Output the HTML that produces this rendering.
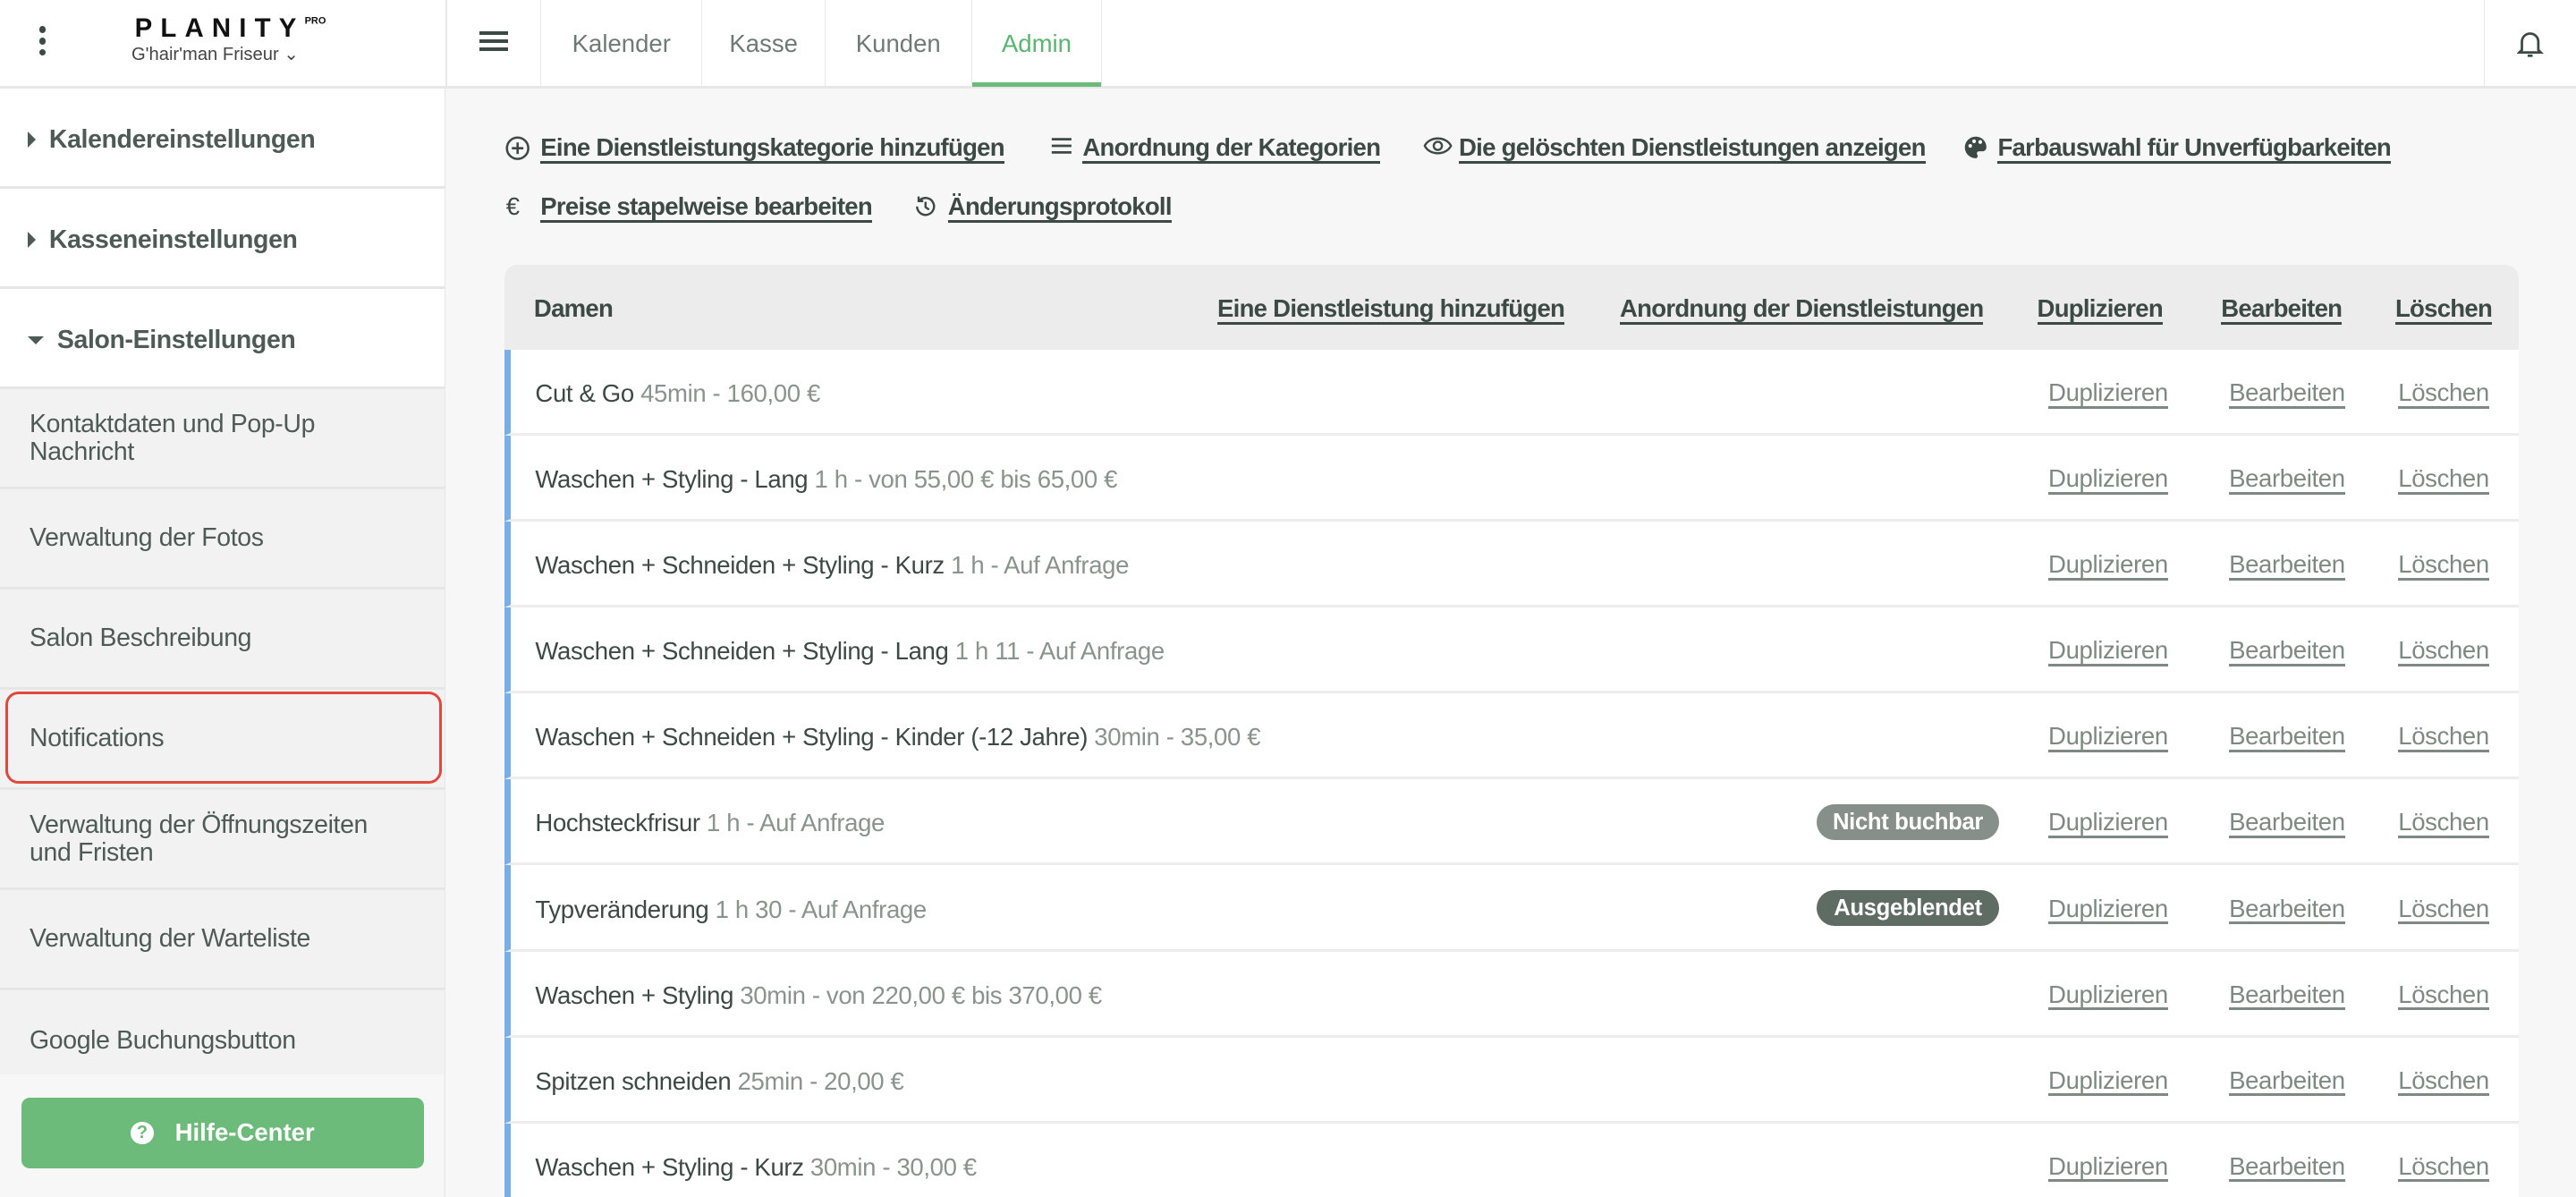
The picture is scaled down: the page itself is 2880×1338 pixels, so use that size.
<!DOCTYPE html>
<html><head><meta charset="utf-8"><style>
*{box-sizing:border-box;margin:0;padding:0}
html,body{width:2880px;height:1338px;overflow:hidden;background:#f7f7f7}
#w{zoom:1.83673;width:1568px;height:728.5px;position:relative;font-family:"Liberation Sans",sans-serif;color:#3d4944;overflow:hidden}
.top{position:absolute;left:0;top:0;width:1568px;height:54px;background:#fff;border-bottom:2px solid #e8e8e8}
.side{position:absolute;left:0;top:54px;width:271px;height:680px;background:#f2f2f2;border-right:1px solid #e6e6e6}
.si{height:61px;border-bottom:2px solid #e6e6e6;display:flex;align-items:center;padding-left:18px;font-size:15.5px;color:#4e5a55;line-height:17px;letter-spacing:-0.2px}
.si.h{background:#fff;font-weight:bold;font-size:15.5px;padding-left:17px;padding-top:3px}
.tri{display:inline-block;width:0;height:0;border-top:5px solid transparent;border-bottom:5px solid transparent;border-left:5px solid #4e5a55;margin-right:8px}
.trid{display:inline-block;width:0;height:0;border-left:5px solid transparent;border-right:5px solid transparent;border-top:5px solid #4e5a55;margin-right:8px}
.tab{position:absolute;top:0;height:53px;border-left:1px solid #e8e8e8;font-size:15px;color:#6f7a75;display:flex;align-items:center;justify-content:center}
.lk{position:absolute;font-size:15px;font-weight:bold;color:#3d4944;border-bottom:2px solid #3d4944;line-height:17px;letter-spacing:-0.4px}
.ic{position:absolute;font-size:15px;color:#3d4944}
.tbl{position:absolute;left:307px;top:161px;width:1226px;background:#fff;border-radius:8px 8px 0 0}
.th{height:52px;background:#ececec;border-radius:8px 8px 0 0;position:relative;font-size:15px;font-weight:bold;letter-spacing:-0.4px}
.th span{position:absolute;top:18px;line-height:17px}
.th .u{border-bottom:2px solid #3d4944}
.row{height:52.3px;border-left:4px solid #79aee6;border-bottom:2px solid #ededed;position:relative;font-size:15px;letter-spacing:-0.2px}
.row .t{position:absolute;left:15px;top:18px;white-space:nowrap}
.row .t i{font-style:normal;color:#8a938e}
.row .a{position:absolute;top:18px;color:#7f8984;border-bottom:2px solid #7f8984;line-height:16px}
.bd{position:absolute;left:795px;top:15px;width:111px;height:22px;border-radius:11px;color:#fff;font-weight:bold;font-size:14px;text-align:center;line-height:22px}
</style></head><body><div id="w">
<div class="top">
 <div style="position:absolute;left:24px;top:16px;width:4px">
  <div style="width:4px;height:4px;border-radius:2px;background:#3d4944;margin-bottom:3px"></div><div style="width:4px;height:4px;border-radius:2px;background:#3d4944;margin-bottom:3px"></div><div style="width:4px;height:4px;border-radius:2px;background:#3d4944"></div></div>
 <div style="position:absolute;left:82px;top:8px;font-size:16px;font-weight:bold;letter-spacing:5px;color:#111">PLANITY<sup style="font-size:6px;letter-spacing:0;vertical-align:8px">PRO</sup></div>
 <div style="position:absolute;left:80px;top:26px;font-size:11px;color:#444">G'hair'man Friseur ⌄</div>
 <div style="position:absolute;left:271px;top:0;width:1px;height:53px;background:#e8e8e8"></div>
 <div style="position:absolute;left:292px;top:19px;width:17px"><div style="height:2px;background:#3d4944;margin-bottom:3px"></div><div style="height:2px;background:#3d4944;margin-bottom:3px"></div><div style="height:2px;background:#3d4944"></div></div>
 <div class="tab" style="left:329px;width:98px">Kalender</div>
 <div class="tab" style="left:427px;width:75px">Kasse</div>
 <div class="tab" style="left:502px;width:89px">Kunden</div>
 <div class="tab" style="left:591px;width:80px;color:#5bb470;border-right:1px solid #e8e8e8">Admin<div style="position:absolute;left:0;right:0;bottom:0;height:3px;background:#6cbb7b"></div></div>
 <div class="tab" style="left:1512px;width:56px"><svg width="16" height="18" viewBox="0 0 16 18" fill="none" stroke="#3d4944" stroke-width="1.5"><path d="M3 13V8a5 5 0 0 1 10 0v5l1.5 1.5h-13z"/><path d="M6.5 16.5h3"/></svg></div>
</div>
<div class="side">
 <div class="si h"><span class="tri"></span>Kalendereinstellungen</div>
 <div class="si h"><span class="tri"></span>Kasseneinstellungen</div>
 <div class="si h"><span class="trid"></span>Salon-Einstellungen</div>
 <div class="si">Kontaktdaten und Pop-Up<br>Nachricht</div>
 <div class="si">Verwaltung der Fotos</div>
 <div class="si">Salon Beschreibung</div>
 <div class="si" style="position:relative">Notifications<div style="position:absolute;left:3px;top:1px;width:266px;height:56px;border:2px solid #e0493b;border-radius:8px"></div></div>
 <div class="si">Verwaltung der Öffnungszeiten<br>und Fristen</div>
 <div class="si">Verwaltung der Warteliste</div>
 <div class="si" style="border:none">Google Buchungsbutton</div>
 <div style="position:absolute;left:0;top:600px;width:270px;height:80px;background:#f7f7f7"></div>
 <div style="position:absolute;left:13px;top:614px;width:245px;height:43px;background:#6cbb7b;border-radius:5px;color:#fff;font-size:15px;font-weight:bold;display:flex;align-items:center;justify-content:center"><span style="display:inline-block;width:14px;height:14px;border-radius:7px;background:#fff;color:#6cbb7b;font-size:11px;text-align:center;line-height:14px;margin-right:13px">?</span>Hilfe-Center</div>
</div>
<svg class="ic" style="left:307px;top:82px" width="16" height="16" viewBox="0 0 16 16" fill="none" stroke="#3d4944" stroke-width="1.4"><circle cx="8" cy="8" r="6.5"/><path d="M8 4.5v7M4.5 8h7"/></svg>
<div class="lk" style="left:329px;top:81px">Eine Dienstleistungskategorie hinzufügen</div>
<svg class="ic" style="left:639px;top:83px" width="14" height="12" viewBox="0 0 14 12" stroke="#3d4944" stroke-width="1.5"><path d="M1 2h12M1 6h12M1 10h12"/></svg>
<div class="lk" style="left:659px;top:81px">Anordnung der Kategorien</div>
<svg class="ic" style="left:866px;top:83px" width="18" height="12" viewBox="0 0 18 12" fill="none" stroke="#3d4944" stroke-width="1.3"><path d="M1 6c3-6 13-6 16 0c-3 6-13 6-16 0z"/><circle cx="9" cy="6" r="2.5"/></svg>
<div class="lk" style="left:888px;top:81px">Die gelöschten Dienstleistungen anzeigen</div>
<svg class="ic" style="left:1195px;top:82px" width="15" height="15" viewBox="0 0 16 16"><path d="M8 1a7 7 0 0 0 0 14c1.5 0 1.5-1.5 1-2.5s0-2 1.5-2H13a2.5 2.5 0 0 0 2-2.5C15 4 12 1 8 1z" fill="#3d4944"/><circle cx="4.5" cy="7" r="1.2" fill="#fff"/><circle cx="7" cy="4" r="1.2" fill="#fff"/><circle cx="11" cy="4.5" r="1.2" fill="#fff"/></svg>
<div class="lk" style="left:1216px;top:81px">Farbauswahl für Unverfügbarkeiten</div>
<div class="ic" style="left:308px;top:117px">€</div>
<div class="lk" style="left:329px;top:117px">Preise stapelweise bearbeiten</div>
<svg class="ic" style="left:556px;top:118px" width="15" height="15" viewBox="0 0 16 16" fill="none" stroke="#3d4944" stroke-width="1.4"><path d="M2.5 8a5.5 5.5 0 1 0 1.6-3.9"/><path d="M3.5 1.5v3h3"/><path d="M8 5v3.5l2.3 1.5"/></svg>
<div class="lk" style="left:577px;top:117px">Änderungsprotokoll</div>
<div class="tbl">
 <div class="th"><span style="left:18px">Damen</span><span class="u" style="left:434px">Eine Dienstleistung hinzufügen</span><span class="u" style="left:679px">Anordnung der Dienstleistungen</span><span class="u" style="left:933px">Duplizieren</span><span class="u" style="left:1045px">Bearbeiten</span><span class="u" style="left:1151px">Löschen</span></div>
 <div class="row"><div class="t">Cut &amp; Go <i>45min - 160,00 €</i></div></div>
 <div class="row"><div class="t">Waschen + Styling - Lang <i>1 h - von 55,00 € bis 65,00 €</i></div></div>
 <div class="row"><div class="t">Waschen + Schneiden + Styling - Kurz <i>1 h - Auf Anfrage</i></div></div>
 <div class="row"><div class="t">Waschen + Schneiden + Styling - Lang <i>1 h 11 - Auf Anfrage</i></div></div>
 <div class="row"><div class="t">Waschen + Schneiden + Styling - Kinder (-12 Jahre) <i>30min - 35,00 €</i></div></div>
 <div class="row"><div class="t">Hochsteckfrisur <i>1 h - Auf Anfrage</i></div><div class="bd" style="background:#878f8a">Nicht buchbar</div></div>
 <div class="row"><div class="t">Typveränderung <i>1 h 30 - Auf Anfrage</i></div><div class="bd" style="background:#5f6c64">Ausgeblendet</div></div>
 <div class="row"><div class="t">Waschen + Styling <i>30min - von 220,00 € bis 370,00 €</i></div></div>
 <div class="row"><div class="t">Spitzen schneiden <i>25min - 20,00 €</i></div></div>
 <div class="row"><div class="t">Waschen + Styling - Kurz <i>30min - 30,00 €</i></div></div>
</div>
<script>
document.querySelectorAll('.row').forEach(r=>{r.insertAdjacentHTML('beforeend','<span class="a" style="left:936px">Duplizieren</span><span class="a" style="left:1046px">Bearbeiten</span><span class="a" style="left:1149px">Löschen</span>')});
</script>
</div></body></html>
